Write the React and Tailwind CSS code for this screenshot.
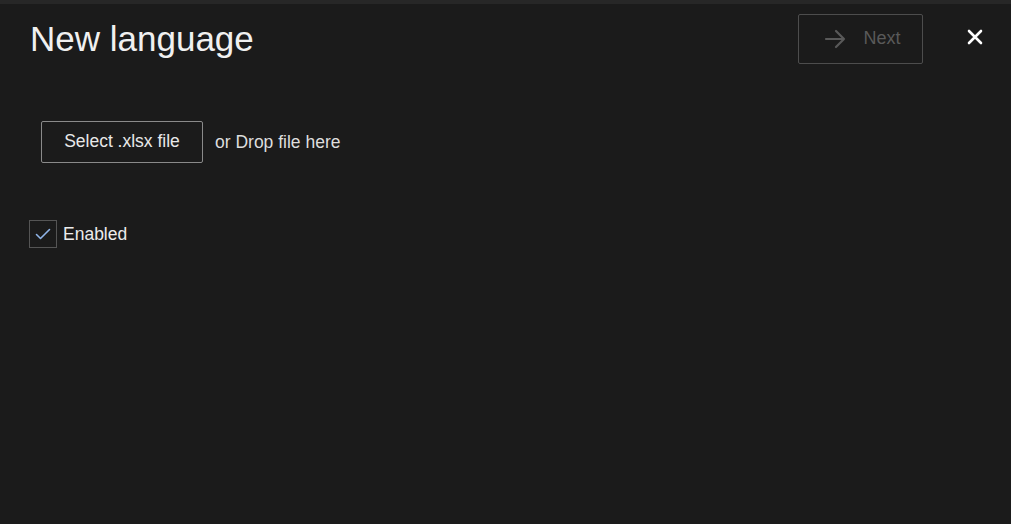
import React from 'react';

function App() {
  return (
    <div className="w-[1011px] h-[524px] bg-[#1b1b1b] text-[#e8e8e8] overflow-hidden" style={{ fontFamily: '"Liberation Sans", Arial, sans-serif' }}>
      <div className="h-[4px] bg-[#272727]" />
      <div className="flex items-start justify-between pl-[30px] pr-[27px] pt-[10px]">
        <h1 className="text-[35px] leading-[52px] font-normal text-[#f0f0f0] mt-[-1px]">New language</h1>
        <div className="flex items-start">
          <button
            disabled
            className="w-[125px] h-[50px] border border-[#4d4d4d] rounded-[2px] flex items-center justify-center gap-[17px] pl-[4px] pb-[1px] text-[18px] text-[#595959]"
          >
            <svg width="22" height="20" viewBox="0 0 22 20" fill="none" stroke="#595959" strokeWidth="2.2" strokeLinecap="round" strokeLinejoin="round">
              <path d="M2 10h18M12 2l8 8-8 8" />
            </svg>
            <span>Next</span>
          </button>
          <button className="ml-[43px] mt-[14px] w-[18px] h-[18px] flex items-center justify-center">
            <svg width="16" height="16" viewBox="0 0 16 16" stroke="#ffffff" strokeWidth="2.6" strokeLinecap="round">
              <path d="M2 2l12 12M14 2L2 14" />
            </svg>
          </button>
        </div>
      </div>

      <div className="pl-[41px] mt-[56px] flex items-center gap-[12px]">
        <button className="w-[162px] h-[42px] border border-[#8a8a8a] rounded-[2px] text-[17.5px] text-[#e8e8e8] pb-[2px]">
          Select .xlsx file
        </button>
        <span className="text-[17.5px] text-[#dedede]">or Drop file here</span>
      </div>

      <label className="pl-[29px] mt-[57px] flex items-center gap-[6px]">
        <span className="w-[28px] h-[28px] border border-[#555555] flex items-center justify-center">
          <svg width="16" height="12" viewBox="0 0 16 12" fill="none" stroke="#8fb4e8" strokeWidth="1.6" strokeLinecap="round" strokeLinejoin="round">
            <path d="M1.5 6.5l4 4 9-9" />
          </svg>
        </span>
        <span className="text-[17.5px] text-[#ececec]">Enabled</span>
      </label>
    </div>
  );
}

export default App;
